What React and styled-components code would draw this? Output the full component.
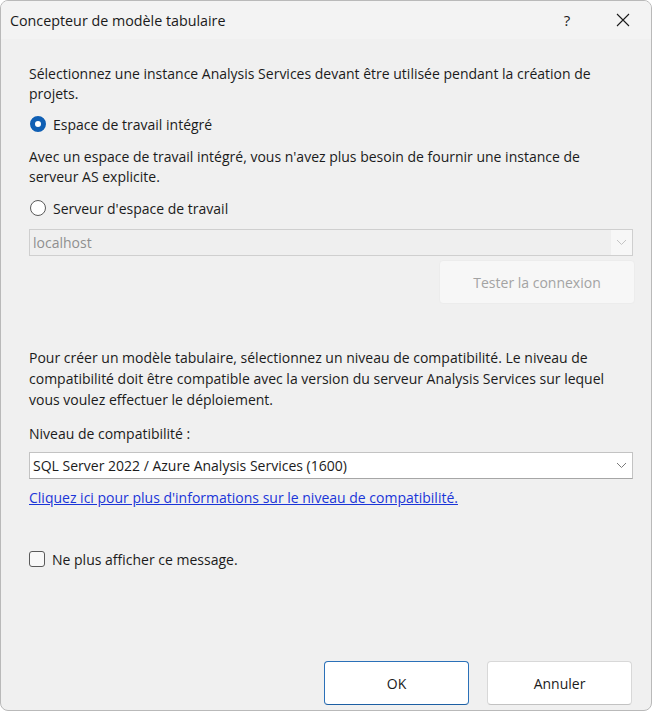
import React from "react";
import styled, { createGlobalStyle } from "styled-components";

const TITLE = "Concepteur de modèle tabulaire";
const INTRO =
  "Sélectionnez une instance Analysis Services devant être utilisée pendant la création de projets.";
const INTEGRATED_NOTE =
  "Avec un espace de travail intégré, vous n'avez plus besoin de fournir une instance de serveur AS explicite.";
const COMPAT_NOTE =
  "Pour créer un modèle tabulaire, sélectionnez un niveau de compatibilité. Le niveau de compatibilité doit être compatible avec la version du serveur Analysis Services sur lequel vous voulez effectuer le déploiement.";

const GlobalStyle = createGlobalStyle`
  html, body {
    margin: 0;
    padding: 0;
    background: #ffffff;
  }
  body {
    font-family: "Open Sans", "Noto Sans", "Liberation Sans", sans-serif;
  }
`;

const Chevron = ({ color = "#7a7a7a" }) => (
  <svg width="11" height="7" viewBox="0 0 11 7" fill="none">
    <path d="M1 1l4.5 4.5L10 1" stroke={color} strokeWidth="1" />
  </svg>
);

const App = () => {
  return (
    <>
      <GlobalStyle />
      <Window>
        <TitleBar>
          <Title>{TITLE}</Title>
          <CaptionButton aria-label="aide">?</CaptionButton>
          <CaptionButton aria-label="fermer">
            <svg width="14" height="14" viewBox="0 0 14 14" fill="none">
              <path d="M1 1l12 12M13 1L1 13" stroke="#1a1a1a" strokeWidth="1.1" />
            </svg>
          </CaptionButton>
        </TitleBar>

        <Body>
          <Text>{INTRO}</Text>

          <OptionRow $gap={10}>
            <Radio $checked />
            <span>Espace de travail intégré</span>
          </OptionRow>

          <Text $gap={13}>{INTEGRATED_NOTE}</Text>

          <OptionRow $gap={11}>
            <Radio />
            <span>Serveur d'espace de travail</span>
          </OptionRow>

          <Combo $disabled $gap={11}>
            <ComboText $disabled>localhost</ComboText>
            <ComboArrow $disabled>
              <Chevron color="#c4c4c4" />
            </ComboArrow>
          </Combo>

          <TestRow>
            <TestButton disabled>Tester la connexion</TestButton>
          </TestRow>

          <Text $gap={43} $lh={21}>
            {COMPAT_NOTE}
          </Text>

          <Text $gap={14}>Niveau de compatibilité :</Text>

          <Combo $gap={8}>
            <ComboText>SQL Server 2022 / Azure Analysis Services (1600)</ComboText>
            <ComboArrow>
              <Chevron />
            </ComboArrow>
          </Combo>

          <Link $gap={9} href="#">
            Cliquez ici pour plus d'informations sur le niveau de compatibilité.
          </Link>

          <OptionRow $gap={41}>
            <Checkbox />
            <span>Ne plus afficher ce message.</span>
          </OptionRow>

          <Footer>
            <DialogButton $primary>OK</DialogButton>
            <DialogButton>Annuler</DialogButton>
          </Footer>
        </Body>
      </Window>
    </>
  );
};

const Window = styled.div`
  box-sizing: border-box;
  width: 652px;
  height: 711px;
  display: flex;
  flex-direction: column;
  background: #f0f0f0;
  border: 1px solid #b9b9b9;
  border-radius: 8px;
  overflow: hidden;
  color: #1b1b1b;
  font-size: 14px;
`;

const TitleBar = styled.div`
  display: flex;
  align-items: center;
  height: 38px;
  padding-left: 9px;
  background: #f3f3f3;
`;

const Title = styled.div`
  flex: 1;
  font-size: 14.3px;
  color: #1a1a1a;
`;

const CaptionButton = styled.div`
  width: 56px;
  height: 38px;
  display: flex;
  align-items: center;
  justify-content: center;
  font-size: 15px;
  color: #1a1a1a;
`;

const Body = styled.div`
  flex: 1;
  display: flex;
  flex-direction: column;
  padding: 25px 18px 5px 28px;
`;

const Text = styled.p`
  margin: ${({ $gap }) => $gap || 0}px 0 0;
  line-height: ${({ $lh }) => $lh || 20}px;
  padding-right: 8px;
`;

const OptionRow = styled.label`
  display: flex;
  align-items: center;
  gap: 7px;
  height: 20px;
  margin-top: ${({ $gap }) => $gap}px;
  padding-left: 1px;
`;

const Radio = styled.span`
  box-sizing: border-box;
  width: 16px;
  height: 16px;
  border-radius: 50%;
  flex-shrink: 0;
  border: ${({ $checked }) => ($checked ? "5px solid #0f5fb4" : "1px solid #5a5a5a")};
  background: #ffffff;
`;

const Checkbox = styled.span`
  box-sizing: border-box;
  width: 16px;
  height: 16px;
  margin-left: -1px;
  border-radius: 3px;
  border: 1px solid #5a5a5a;
  background: #f8f8f8;
`;

const Combo = styled.div`
  box-sizing: border-box;
  display: flex;
  align-items: stretch;
  height: 27px;
  margin-top: ${({ $gap }) => $gap}px;
  background: ${({ $disabled }) => ($disabled ? "#efefef" : "#ffffff")};
  border: 1px solid ${({ $disabled }) => ($disabled ? "#cfcfcf" : "#c3c3c3")};
  border-bottom-color: ${({ $disabled }) => ($disabled ? "#cfcfcf" : "#a6a6a6")};
`;

const ComboText = styled.div`
  flex: 1;
  display: flex;
  align-items: center;
  padding-left: 3px;
  color: ${({ $disabled }) => ($disabled ? "#8f8f8f" : "#1b1b1b")};
`;

const ComboArrow = styled.div`
  width: 21px;
  display: flex;
  align-items: center;
  justify-content: center;
  background: ${({ $disabled }) => ($disabled ? "#f7f7f7" : "transparent")};
`;

const TestRow = styled.div`
  display: flex;
  justify-content: flex-end;
  margin: 4px -2px 0 0;
`;

const TestButton = styled.button`
  width: 196px;
  height: 44px;
  font: inherit;
  color: #a3a3a3;
  background: #f7f7f7;
  border: 1px solid #ececec;
  border-radius: 4px;
`;

const Link = styled.a`
  display: block;
  margin-top: ${({ $gap }) => $gap}px;
  line-height: 20px;
  color: #1a35d8;
  text-decoration: underline;
  align-self: flex-start;
`;

const Footer = styled.div`
  margin-top: auto;
  display: flex;
  justify-content: flex-end;
  gap: 18px;
  padding-right: 1px;
`;

const DialogButton = styled.button`
  width: 145px;
  height: 44px;
  font: inherit;
  font-size: 14px;
  color: #1b1b1b;
  background: #ffffff;
  border: 1px solid ${({ $primary }) => ($primary ? "#2a70b8" : "#d8d8d8")};
  border-bottom-color: ${({ $primary }) => ($primary ? "#1d5fa3" : "#c2c2c2")};
  border-radius: 4px;
`;

export default App;
